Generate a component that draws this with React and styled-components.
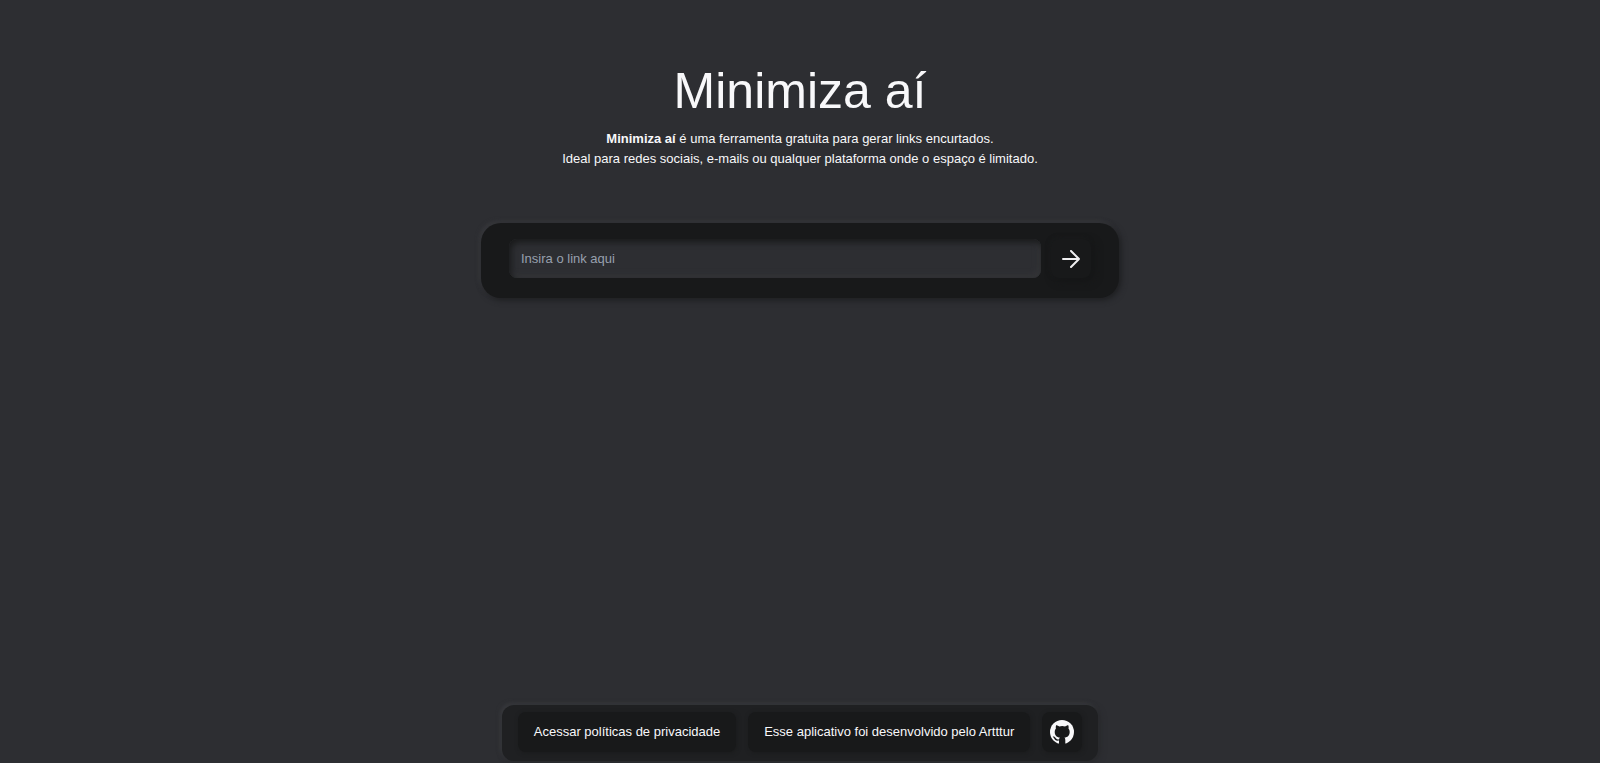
import React from "react";
import styled, { createGlobalStyle } from "styled-components";

const GlobalStyle = createGlobalStyle`
  *, *::before, *::after { box-sizing: border-box; }
  body {
    margin: 0;
    background: #2d2e32;
    color: #f8f8fa;
    font-family: "Liberation Sans", Arial, sans-serif;
    font-size: 13px;
    line-height: 20px;
  }
`;

const Page = styled.div`
  min-height: 100vh;
  display: flex;
  flex-direction: column;
  align-items: center;
  padding-bottom: 2px;
`;

const Main = styled.main`
  flex: 1;
  width: 100%;
  display: flex;
  flex-direction: column;
  align-items: center;
  padding: 61px 16px 32px;
`;

const Title = styled.h1`
  margin: 0;
  font-size: 50px;
  line-height: 60px;
  font-weight: 400;
`;

const Intro = styled.p`
  margin: 8px 0 54px;
  text-align: center;
`;

const LinkForm = styled.form`
  width: 100%;
  max-width: 638px;
  display: flex;
  align-items: center;
  gap: 10px;
  padding: 16px 28px 20px;
  border-radius: 20px;
  background: #18191a;
  box-shadow: 2px 2px 6px #1d1e20, -2px -2px 4px #3a3b3f;
`;

const LinkInput = styled.input`
  flex: 1;
  min-width: 0;
  height: 39px;
  padding: 0 12px;
  border: 0;
  border-radius: 8px;
  outline: 0;
  background: #2d2e32;
  color: #f8f8fa;
  font: inherit;
  box-shadow: inset 2px 3px 6px #18191a, inset -2px -2px 6px #38393c;
  &::placeholder { color: #98a0ae; opacity: 1; }
`;

const SubmitButton = styled.button`
  width: 40px;
  height: 39px;
  display: grid;
  place-items: center;
  padding: 0;
  border: 0;
  border-radius: 8px;
  background: #18191a;
  color: #f0f0f2;
  cursor: pointer;
  box-shadow: 3px 3px 8px #151617, -1px -1px 4px #1b1c1d;
`;

const Footer = styled.footer`
  display: flex;
  flex-wrap: wrap;
  justify-content: center;
  gap: 12px;
  padding: 7px 16px 9px;
  border-radius: 12px;
  background: #1f2022;
  box-shadow: 2px 2px 6px #27282b, -2px -2px 4px #3a3b3f;
`;

const FooterLink = styled.a`
  height: 40px;
  min-width: 40px;
  display: flex;
  align-items: center;
  justify-content: center;
  padding: 0 ${({ $icon }) => ($icon ? 8 : 16)}px;
  border-radius: 8px;
  background: #18191a;
  color: inherit;
  text-decoration: none;
  box-shadow: 1px 1px 4px #1a1b1c;
`;

function Arrow() {
  return (
    <svg width="18" height="18" viewBox="0 0 18 18" fill="none" stroke="currentColor" strokeWidth="2" strokeLinecap="round" strokeLinejoin="round" aria-hidden="true">
      <path d="M1 9H17M9 1L17 9L9 17" />
    </svg>
  );
}

function GithubMark() {
  return (
    <svg width="24" height="24" viewBox="0 0 24 24" fill="none" aria-hidden="true">
      <circle cx="12" cy="12" r="12" fill="currentColor" />
      <path
        d="M9 24v-3.500c-3 .6-4.100-.6-4.800-2.100-.4-.8-.9-1.300-1.500-1.700 1.400-.4 2.300.3 3 1.400.8 1.300 1.800 1.600 3.400 1.100.1-.7.400-1.200.8-1.600-3-.4-5.200-1.900-5.200-5.900 0-1.300.4-2.400 1.200-3.200-.3-.9-.2-2.200.2-3.300 1.200 0 2.200.6 3.200 1.300a11 11 0 0 1 5.800 0c1-.7 2-1.300 3.200-1.300.4 1.100.5 2.400.2 3.300.8.800 1.200 1.900 1.200 3.200 0 4-2.200 5.500-5.200 5.900.5.500.8 1.300.8 2.400v4z"
        fill="#18191a"
      />
    </svg>
  );
}

export default function App() {
  return (
    <Page>
      <GlobalStyle />
      <Main>
        <Title>Minimiza aí</Title>
        <Intro>
          <strong>Minimiza aí</strong> é uma ferramenta gratuita para gerar links encurtados.
          <br />
          Ideal para redes sociais, e-mails ou qualquer plataforma onde o espaço é limitado.
        </Intro>
        <LinkForm onSubmit={(event) => event.preventDefault()}>
          <LinkInput type="url" placeholder="Insira o link aqui" aria-label="Insira o link aqui" />
          <SubmitButton type="submit" aria-label="Encurtar link">
            <Arrow />
          </SubmitButton>
        </LinkForm>
      </Main>
      <Footer>
        <FooterLink href="#privacidade">Acessar políticas de privacidade</FooterLink>
        <FooterLink href="#autor">Esse aplicativo foi desenvolvido pelo Artttur</FooterLink>
        <FooterLink href="#github" aria-label="GitHub" $icon>
          <GithubMark />
        </FooterLink>
      </Footer>
    </Page>
  );
}
